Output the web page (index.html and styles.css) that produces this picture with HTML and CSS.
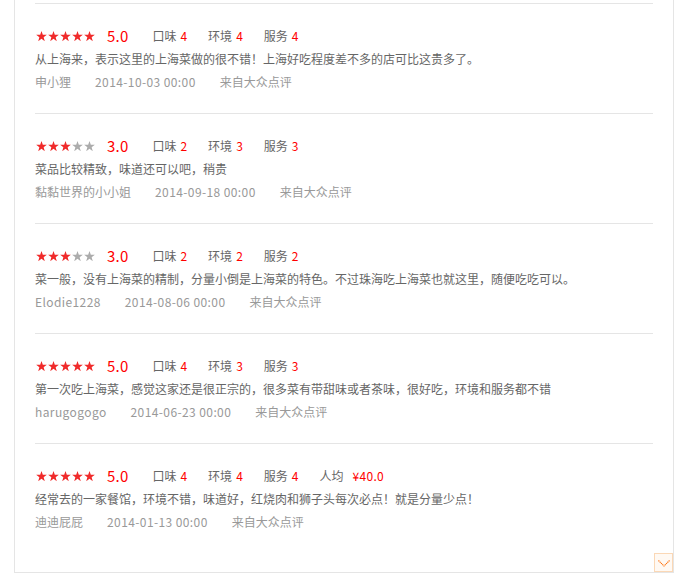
FILE: index.html
```html
<!DOCTYPE html>
<html lang="zh-CN">
<head>
<meta charset="utf-8">
<title>评论</title>
<link rel="stylesheet" href="styles.css">
</head>
<body>
<svg class="defs" width="0" height="0" aria-hidden="true">
  <defs>
    <symbol id="star" viewBox="0 0 11 10.2">
      <polygon points="5.5,0 6.82,3.78 10.83,3.87 7.64,6.3 8.79,10.13 5.5,7.85 2.21,10.13 3.36,6.3 0.17,3.87 4.18,3.78"/>
    </symbol>
  </defs>
</svg>
<div class="box">
  <ul class="reviews">
    <li class="review">
      <div class="meta">
        <svg class="stars" width="59" height="11" viewBox="0 0 59 11">
          <use href="#star" x="0" width="11" height="10.2" class="on"/>
          <use href="#star" x="12" width="11" height="10.2" class="on"/>
          <use href="#star" x="24" width="11" height="10.2" class="on"/>
          <use href="#star" x="36" width="11" height="10.2" class="on"/>
          <use href="#star" x="48" width="11" height="10.2" class="on"/>
        </svg>
        <span class="score">5.0</span>
        <span class="item">口味<em>4</em></span>
        <span class="item">环境<em>4</em></span>
        <span class="item">服务<em>4</em></span>
      </div>
      <p class="text">从上海来，表示这里的上海菜做的很不错！上海好吃程度差不多的店可比这贵多了。</p>
      <div class="info"><span class="name">申小狸</span><span class="date">2014-10-03 00:00</span><span class="src">来自大众点评</span></div>
    </li>
    <li class="review">
      <div class="meta">
        <svg class="stars" width="59" height="11" viewBox="0 0 59 11">
          <use href="#star" x="0" width="11" height="10.2" class="on"/>
          <use href="#star" x="12" width="11" height="10.2" class="on"/>
          <use href="#star" x="24" width="11" height="10.2" class="on"/>
          <use href="#star" x="36" width="11" height="10.2" class="off"/>
          <use href="#star" x="48" width="11" height="10.2" class="off"/>
        </svg>
        <span class="score">3.0</span>
        <span class="item">口味<em>2</em></span>
        <span class="item">环境<em>3</em></span>
        <span class="item">服务<em>3</em></span>
      </div>
      <p class="text">菜品比较精致，味道还可以吧，稍贵</p>
      <div class="info"><span class="name">黏黏世界的小小姐</span><span class="date">2014-09-18 00:00</span><span class="src">来自大众点评</span></div>
    </li>
    <li class="review">
      <div class="meta">
        <svg class="stars" width="59" height="11" viewBox="0 0 59 11">
          <use href="#star" x="0" width="11" height="10.2" class="on"/>
          <use href="#star" x="12" width="11" height="10.2" class="on"/>
          <use href="#star" x="24" width="11" height="10.2" class="on"/>
          <use href="#star" x="36" width="11" height="10.2" class="off"/>
          <use href="#star" x="48" width="11" height="10.2" class="off"/>
        </svg>
        <span class="score">3.0</span>
        <span class="item">口味<em>2</em></span>
        <span class="item">环境<em>2</em></span>
        <span class="item">服务<em>2</em></span>
      </div>
      <p class="text">菜一般，没有上海菜的精制，分量小倒是上海菜的特色。不过珠海吃上海菜也就这里，随便吃吃可以。</p>
      <div class="info"><span class="name latin">Elodie1228</span><span class="date">2014-08-06 00:00</span><span class="src">来自大众点评</span></div>
    </li>
    <li class="review">
      <div class="meta">
        <svg class="stars" width="59" height="11" viewBox="0 0 59 11">
          <use href="#star" x="0" width="11" height="10.2" class="on"/>
          <use href="#star" x="12" width="11" height="10.2" class="on"/>
          <use href="#star" x="24" width="11" height="10.2" class="on"/>
          <use href="#star" x="36" width="11" height="10.2" class="on"/>
          <use href="#star" x="48" width="11" height="10.2" class="on"/>
        </svg>
        <span class="score">5.0</span>
        <span class="item">口味<em>4</em></span>
        <span class="item">环境<em>3</em></span>
        <span class="item">服务<em>3</em></span>
      </div>
      <p class="text">第一次吃上海菜，感觉这家还是很正宗的，很多菜有带甜味或者茶味，很好吃，环境和服务都不错</p>
      <div class="info"><span class="name latin">harugogogo</span><span class="date">2014-06-23 00:00</span><span class="src">来自大众点评</span></div>
    </li>
    <li class="review">
      <div class="meta">
        <svg class="stars" width="59" height="11" viewBox="0 0 59 11">
          <use href="#star" x="0" width="11" height="10.2" class="on"/>
          <use href="#star" x="12" width="11" height="10.2" class="on"/>
          <use href="#star" x="24" width="11" height="10.2" class="on"/>
          <use href="#star" x="36" width="11" height="10.2" class="on"/>
          <use href="#star" x="48" width="11" height="10.2" class="on"/>
        </svg>
        <span class="score">5.0</span>
        <span class="item">口味<em>4</em></span>
        <span class="item">环境<em>4</em></span>
        <span class="item">服务<em>4</em></span>
        <span class="item">人均<em class="price">¥40.0</em></span>
      </div>
      <p class="text">经常去的一家餐馆，环境不错，味道好，红烧肉和狮子头每次必点！就是分量少点！</p>
      <div class="info"><span class="name">迪迪屁屁</span><span class="date">2014-01-13 00:00</span><span class="src">来自大众点评</span></div>
    </li>
  </ul>
  <button class="more" type="button" aria-label="展开">
    <svg width="12" height="7" viewBox="0 0 12 7"><path d="M0.5 0.5 L6 6 L11.5 0.5" fill="none" stroke="#ff6a00" stroke-width="1.1" stroke-dasharray="1.2 0.6"/></svg>
  </button>
</div>
</body>
</html>
```
FILE: styles.css
```css
html, body {
  margin: 0;
  padding: 0;
  background: #fff;
}
body {
  font-family: "Noto Sans CJK SC", "Noto Sans", sans-serif;
  font-size: 12px;
  color: #666;
}
.defs {
  position: absolute;
  width: 0;
  height: 0;
  overflow: hidden;
}
.box {
  position: relative;
  margin-left: 14px;
  width: 660px;
  box-sizing: border-box;
  border: 1px solid #e5e5e5;
  border-top: none;
  padding: 3px 20px 19px;
}
.reviews {
  list-style: none;
  margin: 0;
  padding: 0;
}
.review {
  border-top: 1px solid #e5e5e5;
  padding: 21px 0 20px;
}
.meta {
  display: flex;
  align-items: center;
  height: 22px;
  line-height: 22px;
}
.stars {
  display: block;
  margin-left: 1px;
  margin-right: 12px;
}
.stars .on { fill: #f02b2b; }
.stars .off { fill: #acacac; }
.score {
  font-size: 15px;
  color: #f00;
  margin-right: 24px;
  letter-spacing: 0.2px;
}
.item {
  color: #666;
  margin-right: 21px;
}
.item em {
  font-style: normal;
  color: #f00;
  margin-left: 4px;
}
.item em.price {
  margin-left: 9px;
  letter-spacing: 0.3px;
}
.text {
  margin: 0;
  line-height: 24px;
  color: #666;
  white-space: nowrap;
}
.info {
  line-height: 22px;
  color: #999;
  display: flex;
}
.info .name,
.info .date {
  margin-right: 24px;
}
.info .latin {
  letter-spacing: 0.4px;
}
.info .date {
  letter-spacing: 0.4px;
}
.more {
  position: absolute;
  right: 0;
  bottom: 0;
  width: 19px;
  height: 19px;
  box-sizing: border-box;
  padding: 0;
  margin: 0;
  border: 1px solid #fbd8b6;
  background: #fff9f3;
  display: flex;
  align-items: center;
  justify-content: center;
  cursor: pointer;
}
.more svg {
  display: block;
  margin-top: 1px;
}
```
